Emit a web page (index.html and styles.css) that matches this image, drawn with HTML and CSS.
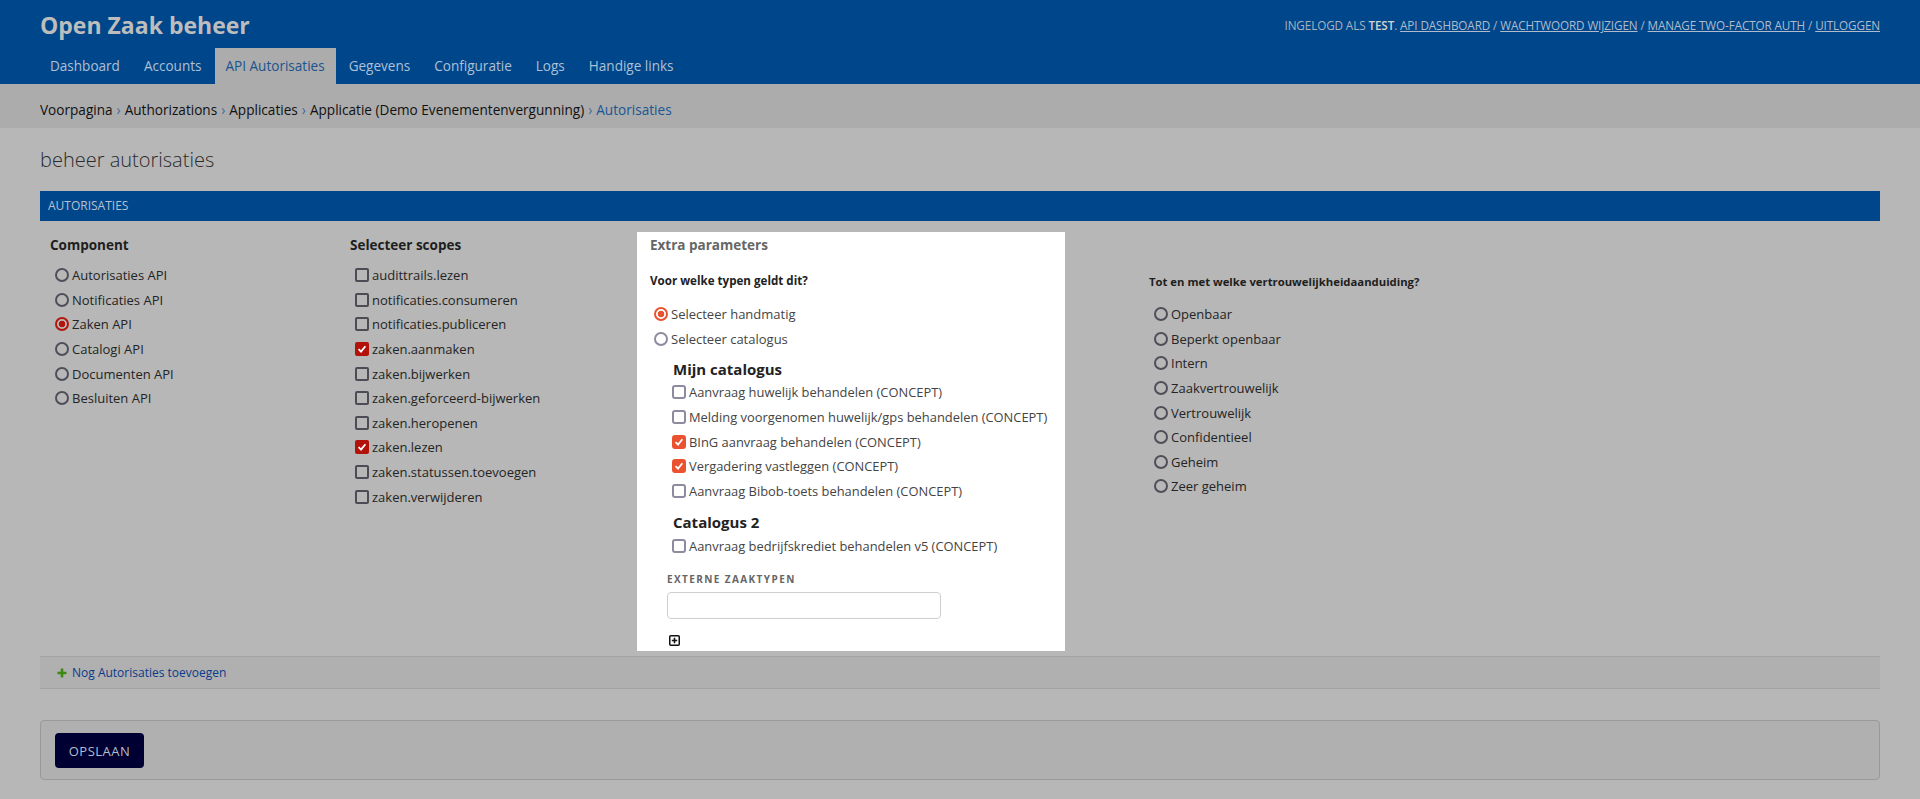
FILE: index.html
```html
<!DOCTYPE html>
<html lang="nl">
<head>
<meta charset="utf-8">
<title>beheer autorisaties | Open Zaak beheer</title>
<link rel="stylesheet" href="styles.css">
</head>
<body>
<header class="header">
  <div class="branding">
    <h1 class="brand">Open Zaak beheer</h1>
    <div class="user-tools">Ingelogd als <strong>test</strong>. <a href="#">API dashboard</a> / <a href="#">Wachtwoord wijzigen</a> / <a href="#">Manage two-factor auth</a> / <a href="#">Uitloggen</a></div>
  </div>
  <nav class="nav">
    <a class="nav-item" href="#">Dashboard</a>
    <a class="nav-item" href="#">Accounts</a>
    <a class="nav-item active" href="#">API Autorisaties</a>
    <a class="nav-item" href="#">Gegevens</a>
    <a class="nav-item" href="#">Configuratie</a>
    <a class="nav-item" href="#">Logs</a>
    <a class="nav-item" href="#">Handige links</a>
  </nav>
</header>
<div class="breadcrumbs">
  <a href="#">Voorpagina</a><span class="sep">›</span><a href="#">Authorizations</a><span class="sep">›</span><a href="#">Applicaties</a><span class="sep">›</span><a href="#">Applicatie (Demo Evenementenvergunning)</a><span class="sep">›</span><span class="current">Autorisaties</span>
</div>
<main class="content">
  <h2 class="page-title">beheer autorisaties</h2>
  <section class="module">
    <h3 class="module-title">Autorisaties</h3>
    <div class="auth-row">
      <div class="col col-component">
        <h4 class="col-title">Component</h4>
        <ul class="opt-list">
          <li class="opt"><span class="radio"></span>Autorisaties API</li>
          <li class="opt"><span class="radio"></span>Notificaties API</li>
          <li class="opt"><span class="radio checked"></span>Zaken API</li>
          <li class="opt"><span class="radio"></span>Catalogi API</li>
          <li class="opt"><span class="radio"></span>Documenten API</li>
          <li class="opt"><span class="radio"></span>Besluiten API</li>
        </ul>
      </div>
      <div class="col col-scopes">
        <h4 class="col-title">Selecteer scopes</h4>
        <ul class="opt-list">
          <li class="opt"><span class="cb"></span>audittrails.lezen</li>
          <li class="opt"><span class="cb"></span>notificaties.consumeren</li>
          <li class="opt"><span class="cb"></span>notificaties.publiceren</li>
          <li class="opt"><span class="cb checked"><svg viewBox="0 0 10 10" width="10" height="10"><path d="M1.6 5.2 L4 7.6 L8.4 2.2" fill="none" stroke="#fff" stroke-width="1.8"/></svg></span>zaken.aanmaken</li>
          <li class="opt"><span class="cb"></span>zaken.bijwerken</li>
          <li class="opt"><span class="cb"></span>zaken.geforceerd-bijwerken</li>
          <li class="opt"><span class="cb"></span>zaken.heropenen</li>
          <li class="opt"><span class="cb checked"><svg viewBox="0 0 10 10" width="10" height="10"><path d="M1.6 5.2 L4 7.6 L8.4 2.2" fill="none" stroke="#fff" stroke-width="1.8"/></svg></span>zaken.lezen</li>
          <li class="opt"><span class="cb"></span>zaken.statussen.toevoegen</li>
          <li class="opt"><span class="cb"></span>zaken.verwijderen</li>
        </ul>
      </div>
      <div class="panel">
        <h4 class="panel-title">Extra parameters</h4>
        <p class="panel-question">Voor welke typen geldt dit?</p>
        <ul class="opt-list panel-radios">
          <li class="opt"><span class="radio checked"></span>Selecteer handmatig</li>
          <li class="opt"><span class="radio"></span>Selecteer catalogus</li>
        </ul>
        <div class="catalog">
          <h5 class="catalog-title">Mijn catalogus</h5>
          <ul class="opt-list">
            <li class="opt"><span class="cb"></span>Aanvraag huwelijk behandelen (CONCEPT)</li>
            <li class="opt"><span class="cb"></span>Melding voorgenomen huwelijk/gps behandelen (CONCEPT)</li>
            <li class="opt"><span class="cb checked"><svg viewBox="0 0 10 10" width="10" height="10"><path d="M1.6 5.2 L4 7.6 L8.4 2.2" fill="none" stroke="#fff" stroke-width="1.8"/></svg></span>BInG aanvraag behandelen (CONCEPT)</li>
            <li class="opt"><span class="cb checked"><svg viewBox="0 0 10 10" width="10" height="10"><path d="M1.6 5.2 L4 7.6 L8.4 2.2" fill="none" stroke="#fff" stroke-width="1.8"/></svg></span>Vergadering vastleggen (CONCEPT)</li>
            <li class="opt"><span class="cb"></span>Aanvraag Bibob-toets behandelen (CONCEPT)</li>
          </ul>
          <h5 class="catalog-title second">Catalogus 2</h5>
          <ul class="opt-list">
            <li class="opt"><span class="cb"></span>Aanvraag bedrijfskrediet behandelen v5 (CONCEPT)</li>
          </ul>
        </div>
        <label class="ext-label" for="ext">Externe zaaktypen</label>
        <input class="ext-input" id="ext" type="text">
        <span class="add-box"><svg viewBox="0 0 11 11" width="11" height="11"><rect x="0.75" y="0.75" width="9.5" height="9.5" fill="none" stroke="#111" stroke-width="1.5" rx="1"/><path d="M5.5 2.8 V8.2 M2.8 5.5 H8.2" stroke="#111" stroke-width="1.6"/></svg></span>
      </div>
      <div class="col col-vertrouw">
        <h4 class="col-title small">Tot en met welke vertrouwelijkheidaanduiding?</h4>
        <ul class="opt-list">
          <li class="opt"><span class="radio"></span>Openbaar</li>
          <li class="opt"><span class="radio"></span>Beperkt openbaar</li>
          <li class="opt"><span class="radio"></span>Intern</li>
          <li class="opt"><span class="radio"></span>Zaakvertrouwelijk</li>
          <li class="opt"><span class="radio"></span>Vertrouwelijk</li>
          <li class="opt"><span class="radio"></span>Confidentieel</li>
          <li class="opt"><span class="radio"></span>Geheim</li>
          <li class="opt"><span class="radio"></span>Zeer geheim</li>
        </ul>
      </div>
    </div>
    <div class="add-row">
      <svg class="add-plus" viewBox="0 0 10 10" width="10" height="10"><path d="M5 0.5 V9.5 M0.5 5 H9.5" stroke="#3d8a12" stroke-width="2.6"/></svg>
      <a href="#">Nog Autorisaties toevoegen</a>
    </div>
  </section>
  <div class="submit-row">
    <button class="save" type="button">OPSLAAN</button>
  </div>
</main>
</body>
</html>
```

FILE: styles.css
```css
* { box-sizing: border-box; }

body {
  margin: 0;
  font-family: "Open Sans", "Noto Sans", sans-serif;
  background: #b7b7b7;
  color: #222;
}

a { text-decoration: none; color: inherit; }

/* header */
.header {
  background: #00468a;
  padding: 0 40px;
}
.branding {
  display: flex;
  justify-content: space-between;
  align-items: center;
  height: 48px;
  padding-top: 2px;
}
.brand {
  margin: 0;
  font-size: 23px;
  line-height: 28px;
  font-weight: 700;
  color: #bdbdbd;
}
.user-tools {
  font-size: 11.7px;
  color: #a9b4c3;
  text-transform: uppercase;
  letter-spacing: -0.1px;
}
.user-tools strong { color: #d2d2d2; font-weight: 600; }
.user-tools a { color: #b0bccb; text-decoration: underline; }

.nav {
  display: flex;
  height: 36px;
  margin-left: -1px;
}
.nav-item {
  padding: 0 11px;
  margin-right: 2px;
  line-height: 36px;
  font-size: 13.55px;
  color: #aec0d5;
}
.nav-item.active {
  background: #acacac;
  color: #19548f;
}

/* breadcrumbs */
.breadcrumbs {
  background: #acacac;
  padding: 16px 40px 8px;
  height: 44px;
  line-height: 20px;
  font-size: 13.6px;
  color: #111;
}
.breadcrumbs .sep { color: #3d6a9a; margin: 0 4px; }
.breadcrumbs .current { color: #1a5694; }

/* content */
.content { padding: 0 40px; }
.page-title {
  margin: 20px 0 19px;
  font-size: 20px;
  line-height: 24px;
  font-weight: 300;
  color: #2b2b2b;
}

.module { margin: 0; }
.module-title {
  margin: 0;
  height: 30px;
  line-height: 30px;
  padding-left: 8px;
  background: #00468a;
  color: #b5c1d2;
  font-size: 12px;
  font-weight: 400;
  text-transform: uppercase;
}

.auth-row {
  display: flex;
  align-items: flex-start;
  padding-left: 10px;
}
.col-component { width: 300px; padding-top: 14px; }
.col-scopes { width: 287px; padding-top: 14px; }
.col-vertrouw { margin-left: 84px; padding-top: 51px; }

.col-title {
  margin: 0 0 8px;
  font-size: 13.5px;
  line-height: 20px;
  font-weight: 700;
  color: #1e1e1e;
}
.col-title.small { font-size: 11.3px; margin-bottom: 10px; }

.opt-list {
  list-style: none;
  margin: 0;
  padding: 0 0 0 5px;
}
.opt {
  display: flex;
  align-items: center;
  gap: 3px;
  height: 24.6px;
  font-size: 13px;
  color: #242424;
  white-space: nowrap;
}

.radio {
  flex: none;
  width: 14px;
  height: 14px;
  border: 2px solid #4f4f5a;
  border-radius: 50%;
}
.radio.checked {
  border-color: #b3160c;
  background: radial-gradient(circle, #b3160c 0, #b3160c 3px, transparent 3.6px);
}
.cb {
  flex: none;
  display: flex;
  align-items: center;
  justify-content: center;
  width: 14px;
  height: 14px;
  border: 2px solid #4c4c57;
  border-radius: 2px;
}
.cb.checked {
  border-color: #b3120b;
  background: #b3120b;
}

/* panel */
.panel {
  width: 428px;
  margin-top: 11px;
  padding: 3px 13px 5px;
  background: #fff;
}
.panel-title {
  margin: 0 0 17px;
  font-size: 13.5px;
  line-height: 20px;
  font-weight: 700;
  color: #666;
}
.panel-question {
  margin: 0 0 11px;
  font-size: 11.6px;
  line-height: 18px;
  font-weight: 700;
  color: #222;
}
.panel .opt { color: #444; }
.panel-radios { padding-left: 4px; }
.panel-radios .opt { height: 25px; }
.panel .radio { border-color: #8d8b9f; }
.panel .radio.checked {
  border-color: #ea5230;
  background: radial-gradient(circle, #ea5230 0, #ea5230 3px, transparent 3.6px);
}
.panel .cb { border-color: #8d8b9f; border-radius: 3px; }
.panel .cb.checked { border-color: #ea5230; background: #ea5230; }

.catalog { padding-left: 22px; }
.catalog .opt-list { padding-left: 0; }
.catalog .opt { height: 24.7px; font-size: 12.9px; }
.catalog-title {
  margin: 8px 0 1px 1px;
  font-size: 15px;
  line-height: 20px;
  font-weight: 700;
  color: #222;
}
.catalog-title.second { margin-top: 9px; }

.ext-label {
  display: block;
  margin: 14px 0 6px 17px;
  font-size: 10px;
  line-height: 14px;
  font-weight: 700;
  letter-spacing: 1.4px;
  color: #666;
  text-transform: uppercase;
}
.ext-input {
  display: block;
  margin-left: 17px;
  width: 274px;
  height: 27px;
  border: 1px solid #cfcfcf;
  border-radius: 4px;
  background: #fff;
}
.add-box {
  display: block;
  margin: 16px 0 0 19px;
  width: 11px;
  height: 11px;
  line-height: 0;
}

/* add row */
.add-row {
  display: flex;
  align-items: center;
  gap: 5px;
  margin-top: 5px;
  height: 33px;
  padding-left: 17px;
  background: #b0b0b0;
  border-top: 1px solid #a3a3a3;
  border-bottom: 1px solid #a3a3a3;
  font-size: 12px;
}
.add-row a { color: #0b3a8a; }

/* submit */
.submit-row {
  margin-top: 31px;
  padding: 12px 14px 11px;
  background: #b0b0b0;
  border: 1px solid #999;
  border-radius: 4px;
}
.save {
  display: block;
  width: 89px;
  height: 35px;
  border: none;
  border-radius: 4px;
  background: #000033;
  color: #b3bfcd;
  font-family: "Open Sans", "Noto Sans", sans-serif;
  font-size: 13px;
  letter-spacing: 0.5px;
}
```
